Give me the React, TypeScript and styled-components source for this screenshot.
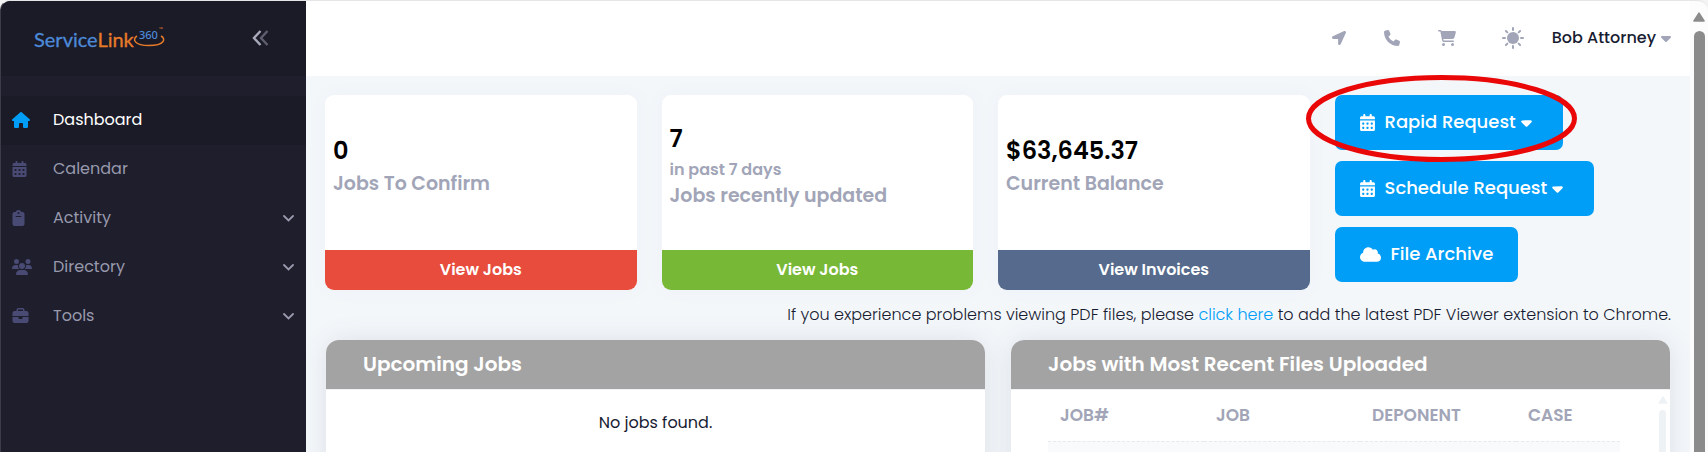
import React from "react";
import styled, { createGlobalStyle, css } from "styled-components";
import {
  FaBriefcase,
  FaCalendarDays,
  FaCaretDown,
  FaCartShopping,
  FaClipboard,
  FaCloud,
  FaHouse,
  FaPhone,
  FaUsers,
} from "react-icons/fa6";
import { FaLocationArrow } from "react-icons/fa";

const color = {
  sidebar: "#1e1e2d",
  sidebarDark: "#1b1b28",
  navText: "#9899ac",
  navIcon: "#494b74",
  primary: "#009ef7",
  muted: "#a1a5b7",
  ink: "#181c32",
  page: "#f4f7fa",
  panelHead: "#a3a3a3",
};

const GlobalStyle = createGlobalStyle`
  *, *::before, *::after { box-sizing: border-box; }
  body {
    margin: 0;
    background: #f3f3f3;
    color: ${color.ink};
    font-family: Poppins, Inter, "Open Sans", sans-serif;
    font-size: 16px;
    line-height: 24px;
  }
  button { font: inherit; border: 0; cursor: pointer; }
  a { text-decoration: none; }
  h2, p, ul { margin: 0; padding: 0; }
`;

const Frame = styled.div`
  display: flex;
  height: 100vh;
  border-top: 1px solid #e4e5e7;
  border-left: 1px solid #3c3c49;
  border-radius: 10px 10px 0 0;
  background: #fcfcfc;
  overflow: hidden;
`;

const Sidebar = styled.aside`
  flex: 0 0 305px;
  background: ${color.sidebar};
`;

const Brand = styled.div`
  display: flex;
  align-items: center;
  justify-content: space-between;
  height: 75px;
  padding: 0 36px 2px 32px;
  background: ${color.sidebarDark};
`;

/* Trims the square box of an icon to the width of its drawing. */
const Glyph = styled.span<{ $width: number; $height?: number }>`
  display: flex;

  svg {
    width: ${(p) => p.$width}px;
    height: ${(p) => p.$height ?? 16}px;
  }
`;

const PlainButton = styled.button`
  display: flex;
  align-items: center;
  padding: 0;
  background: none;
  color: inherit;
`;

const NavList = styled.ul`
  padding-top: 20px;
  list-style: none;
`;

const NavLink = styled.a<{ $active?: boolean }>`
  display: flex;
  align-items: center;
  height: 49px;
  padding: 0 12px 1px 11px;
  color: ${(p) => (p.$active ? "#fff" : color.navText)};
  ${(p) => p.$active && css`background: ${color.sidebarDark};`}
`;

const NavIcon = styled.i<{ $active?: boolean }>`
  display: flex;
  width: 41px;
  color: ${(p) => (p.$active ? color.primary : color.navIcon)};
`;

const NavLabel = styled.span`
  flex: 1;
`;

const Main = styled.main`
  flex: 1;
  min-width: 0;
  background: ${color.page};
`;

const Topbar = styled.header`
  display: flex;
  align-items: center;
  justify-content: flex-end;
  height: 75px;
  padding: 0 19px 2px 0;
  background: #fff;
  color: ${color.muted};
`;

const Tools = styled.nav`
  display: flex;
  align-items: center;
  gap: 38px;
  margin-right: 28px;

  > :last-child { margin-left: 8px; }
`;

const UserButton = styled(PlainButton)`
  gap: 5px;
  font-weight: 500;
  color: ${color.ink};

  svg { color: ${color.muted}; }
`;

const Content = styled.div`
  padding: 19px;
`;

const Summary = styled.section`
  display: grid;
  grid-template-columns: 312fr 312fr 312fr 337fr;
  gap: 25px;
`;

const Card = styled.article`
  display: flex;
  flex-direction: column;
  height: 195px;
  border-radius: 9px;
  background: #fff;
  box-shadow: 0 0 20px rgba(76, 87, 125, 0.04);
  overflow: hidden;
`;

const CardBody = styled.div`
  flex: 1;
  display: flex;
  flex-direction: column;
  justify-content: center;
  padding: 0 8px 16px;
  color: ${color.muted};
  font-weight: 600;
`;

const Figure = styled.strong`
  font-size: 24px;
  line-height: 38px;
  font-weight: 600;
  color: #000;
`;

const CardLabel = styled.span`
  font-size: 19px;
  line-height: 28px;
`;

const CardLink = styled.a<{ $tone: string }>`
  height: 40px;
  background: ${(p) => p.$tone};
  color: #fff;
  font-weight: 600;
  line-height: 40px;
  text-align: center;
`;

const Actions = styled.div`
  display: flex;
  flex-direction: column;
  align-items: flex-start;
  gap: 11px;
`;

const Highlighted = styled.div`
  position: relative;
`;

const Ring = styled.svg`
  position: absolute;
  top: -20px;
  left: -29px;
  width: 271px;
  height: 87px;
  pointer-events: none;
`;

const ActionButton = styled.button<{ $menu?: boolean }>`
  display: flex;
  align-items: center;
  height: 55px;
  padding: 0 ${(p) => (p.$menu ? 31 : 25)}px 1px 25px;
  border-radius: 7px;
  background: ${color.primary};
  color: #fff;
  font-size: 18px;
  font-weight: 500;
  white-space: nowrap;
`;

const ActionLabel = styled.span`
  margin: 0 5px 0 10px;

  &:last-child { margin-right: 0; }
`;

const Notice = styled.p`
  padding: 13px 0;
  font-weight: 300;
  text-align: right;

  a { color: ${color.primary}; }
`;

const Panels = styled.section`
  display: grid;
  grid-template-columns: 1fr 1fr;
  gap: 26px;
  padding: 0 1px;
`;

const Panel = styled.article`
  min-height: 240px;
  border-radius: 13px;
  background: #fff;
  box-shadow: 0 0 26px rgba(60, 75, 95, 0.12);
  overflow: hidden;
`;

const PanelTitle = styled.h2`
  height: 50px;
  padding: 0 37px;
  border-bottom: 1px solid #eff2f5;
  background: ${color.panelHead};
  background-clip: padding-box;
  color: #fff;
  font-size: 20px;
  font-weight: 600;
  line-height: 48px;
`;

const Empty = styled.p`
  padding-top: 21px;
  text-align: center;
`;

const ScrollArea = styled.div`
  display: flex;
  justify-content: space-between;
  height: 190px;
  padding: 6px 3px 0 37px;
`;

const Table = styled.table`
  flex: 1;
  margin-right: 38px;
  border-collapse: collapse;
  table-layout: fixed;
  align-self: flex-start;

  th {
    width: 27%;
    height: 45px;
    padding: 0 0 6px 12px;
    border-bottom: 1px dashed #e6e9ee;
    color: ${color.muted};
    font-size: 17px;
    font-weight: 600;
    text-align: left;
  }
  th:last-child { width: 18%; }
  td { height: 60px; background: #f8fafb; }
`;

const Track = styled.div<{ $wide?: boolean }>`
  display: flex;
  flex-direction: column;
  align-items: center;
  gap: ${(p) => (p.$wide ? 9 : 6)}px;
  width: ${(p) => (p.$wide ? 18 : 9)}px;
  ${(p) => p.$wide && css`padding-top: 11px;`}
  color: ${(p) => (p.$wide ? "#8b8b8b" : "#eff2f5")};
`;

const Thumb = styled.div<{ $wide?: boolean }>`
  flex: 1;
  width: ${(p) => (p.$wide ? 11 : 7)}px;
  border-radius: 6px 6px 0 0;
  background: currentColor;
`;

const Arrow = ({ size }: { size: number }) => (
  <svg width={size} height={size - 2} viewBox="0 0 12 10" aria-hidden="true">
    <path d="M6 1.2 11 9H1z" fill="currentColor" stroke="currentColor" strokeWidth="1.6" strokeLinejoin="round" />
  </svg>
);

const Logo = () => (
  <svg width="136" height="26" viewBox="0 0 136 26" role="img" aria-label="ServiceLink360">
    <text x="1" y="22" fontFamily="Lato, sans-serif" fontSize="20" fill="#4d8ad8" stroke="#4d8ad8" strokeWidth="0.3">
      Service<tspan fill="#e87b28" stroke="#e87b28">Link</tspan>
    </text>
    <path d="M104 11 C99 14 101 20.500 116 20.500 C132 20.500 133 13.500 128 11" fill="none" stroke="#e87b28" strokeWidth="1.500" />
    <text x="106" y="14" fontFamily="'Noto Sans', sans-serif" fontSize="11" fontWeight="500" fill="#4d8ad8">360</text>
    <text x="126" y="6" fontFamily="'Noto Sans', sans-serif" fontSize="5" fill="#e87b28">™</text>
  </svg>
);

const Collapse = () => (
  <svg width="18" height="16" viewBox="0 0 18 16" fill="none" strokeWidth="2.400" aria-hidden="true">
    <path d="M15.500 1 9 8l6.500 7" stroke="#5d5e6e" />
    <path d="M8.500 1 2 8l6.500 7" stroke="#a8a9bb" />
  </svg>
);

const Chevron = () => (
  <svg width="11" height="7" viewBox="0 0 11 7" fill="none" aria-hidden="true">
    <path d="M1 1l4.500 4.500L10 1" stroke="currentColor" strokeWidth="1.800" strokeLinecap="round" />
  </svg>
);

const Sun = () => (
  <svg width="22" height="22" viewBox="0 0 22 22" aria-hidden="true">
    <circle cx="11" cy="11" r="6" fill="currentColor" />
    {[0, 45, 90, 135, 180, 225, 270, 315].map((a) => (
      <path key={a} d="M11 1v2" stroke="currentColor" strokeWidth="2" strokeLinecap="round" transform={`rotate(${a} 11 11)`} />
    ))}
  </svg>
);

const navItems = [
  { label: "Dashboard", icon: <FaHouse />, width: 18, active: true },
  { label: "Calendar", icon: <FaCalendarDays />, width: 15 },
  { label: "Activity", icon: <FaClipboard />, width: 13, nested: true },
  { label: "Directory", icon: <FaUsers />, width: 20, nested: true },
  { label: "Tools", icon: <FaBriefcase />, width: 17, nested: true },
];

const cards = [
  { value: "0", label: "Jobs To Confirm", link: "View Jobs", tone: "#e74c3c" },
  { value: "7", note: "in past 7 days", label: "Jobs recently updated", link: "View Jobs", tone: "#78b837" },
  { value: "$63,645.37", label: "Current Balance", link: "View Invoices", tone: "#556a8c" },
];

const columns = ["JOB#", "JOB", "DEPONENT", "CASE"];

const RequestButton = ({ label }: { label: string }) => (
  <ActionButton $menu>
    <Glyph $width={15} $height={17}><FaCalendarDays /></Glyph>
    <ActionLabel>{label}</ActionLabel>
    <Glyph $width={11} $height={17}><FaCaretDown /></Glyph>
  </ActionButton>
);

export default function App() {
  return (
    <>
      <GlobalStyle />
      <Frame>
        <Sidebar>
          <Brand>
            <Logo />
            <PlainButton aria-label="Collapse menu"><Collapse /></PlainButton>
          </Brand>
          <NavList>
            {navItems.map((item) => (
              <li key={item.label}>
                <NavLink href="#" $active={item.active}>
                  <NavIcon $active={item.active}><Glyph $width={item.width}>{item.icon}</Glyph></NavIcon>
                  <NavLabel>{item.label}</NavLabel>
                  {item.nested && <Chevron />}
                </NavLink>
              </li>
            ))}
          </NavList>
        </Sidebar>
        <Main>
          <Topbar>
            <Tools>
              <PlainButton aria-label="Location"><Glyph $width={14} $height={14}><FaLocationArrow /></Glyph></PlainButton>
              <PlainButton aria-label="Call"><Glyph $width={16}><FaPhone /></Glyph></PlainButton>
              <PlainButton aria-label="Cart"><Glyph $width={18}><FaCartShopping /></Glyph></PlainButton>
              <PlainButton aria-label="Theme"><Sun /></PlainButton>
            </Tools>
            <UserButton>
              Bob Attorney
              <Glyph $width={10}><FaCaretDown /></Glyph>
            </UserButton>
          </Topbar>
          <Content>
            <Summary>
              {cards.map((card) => (
                <Card key={card.label}>
                  <CardBody>
                    <Figure>{card.value}</Figure>
                    {card.note && <span>{card.note}</span>}
                    <CardLabel>{card.label}</CardLabel>
                  </CardBody>
                  <CardLink href="#" $tone={card.tone}>{card.link}</CardLink>
                </Card>
              ))}
              <Actions>
                <Highlighted>
                  <RequestButton label="Rapid Request" />
                  <Ring viewBox="0 0 271 87" aria-hidden="true">
                    <ellipse cx="135.500" cy="43.500" rx="133" ry="41" fill="none" stroke="#e90707" strokeWidth="5" />
                  </Ring>
                </Highlighted>
                <RequestButton label="Schedule Request" />
                <ActionButton>
                  <Glyph $width={21} $height={17}><FaCloud /></Glyph>
                  <ActionLabel>File Archive</ActionLabel>
                </ActionButton>
              </Actions>
            </Summary>
            <Notice>
              If you experience problems viewing PDF files, please <a href="#">click here</a> to add the latest PDF Viewer extension to Chrome.
            </Notice>
            <Panels>
              <Panel>
                <PanelTitle>Upcoming Jobs</PanelTitle>
                <Empty>No jobs found.</Empty>
              </Panel>
              <Panel>
                <PanelTitle>Jobs with Most Recent Files Uploaded</PanelTitle>
                <ScrollArea>
                  <Table>
                    <thead>
                      <tr>{columns.map((name) => <th key={name} scope="col">{name}</th>)}</tr>
                    </thead>
                    <tbody>
                      <tr><td colSpan={4} /></tr>
                    </tbody>
                  </Table>
                  <Track><Arrow size={10} /><Thumb /></Track>
                </ScrollArea>
              </Panel>
            </Panels>
          </Content>
        </Main>
        <Track $wide><Arrow size={12} /><Thumb $wide /></Track>
      </Frame>
    </>
  );
}
